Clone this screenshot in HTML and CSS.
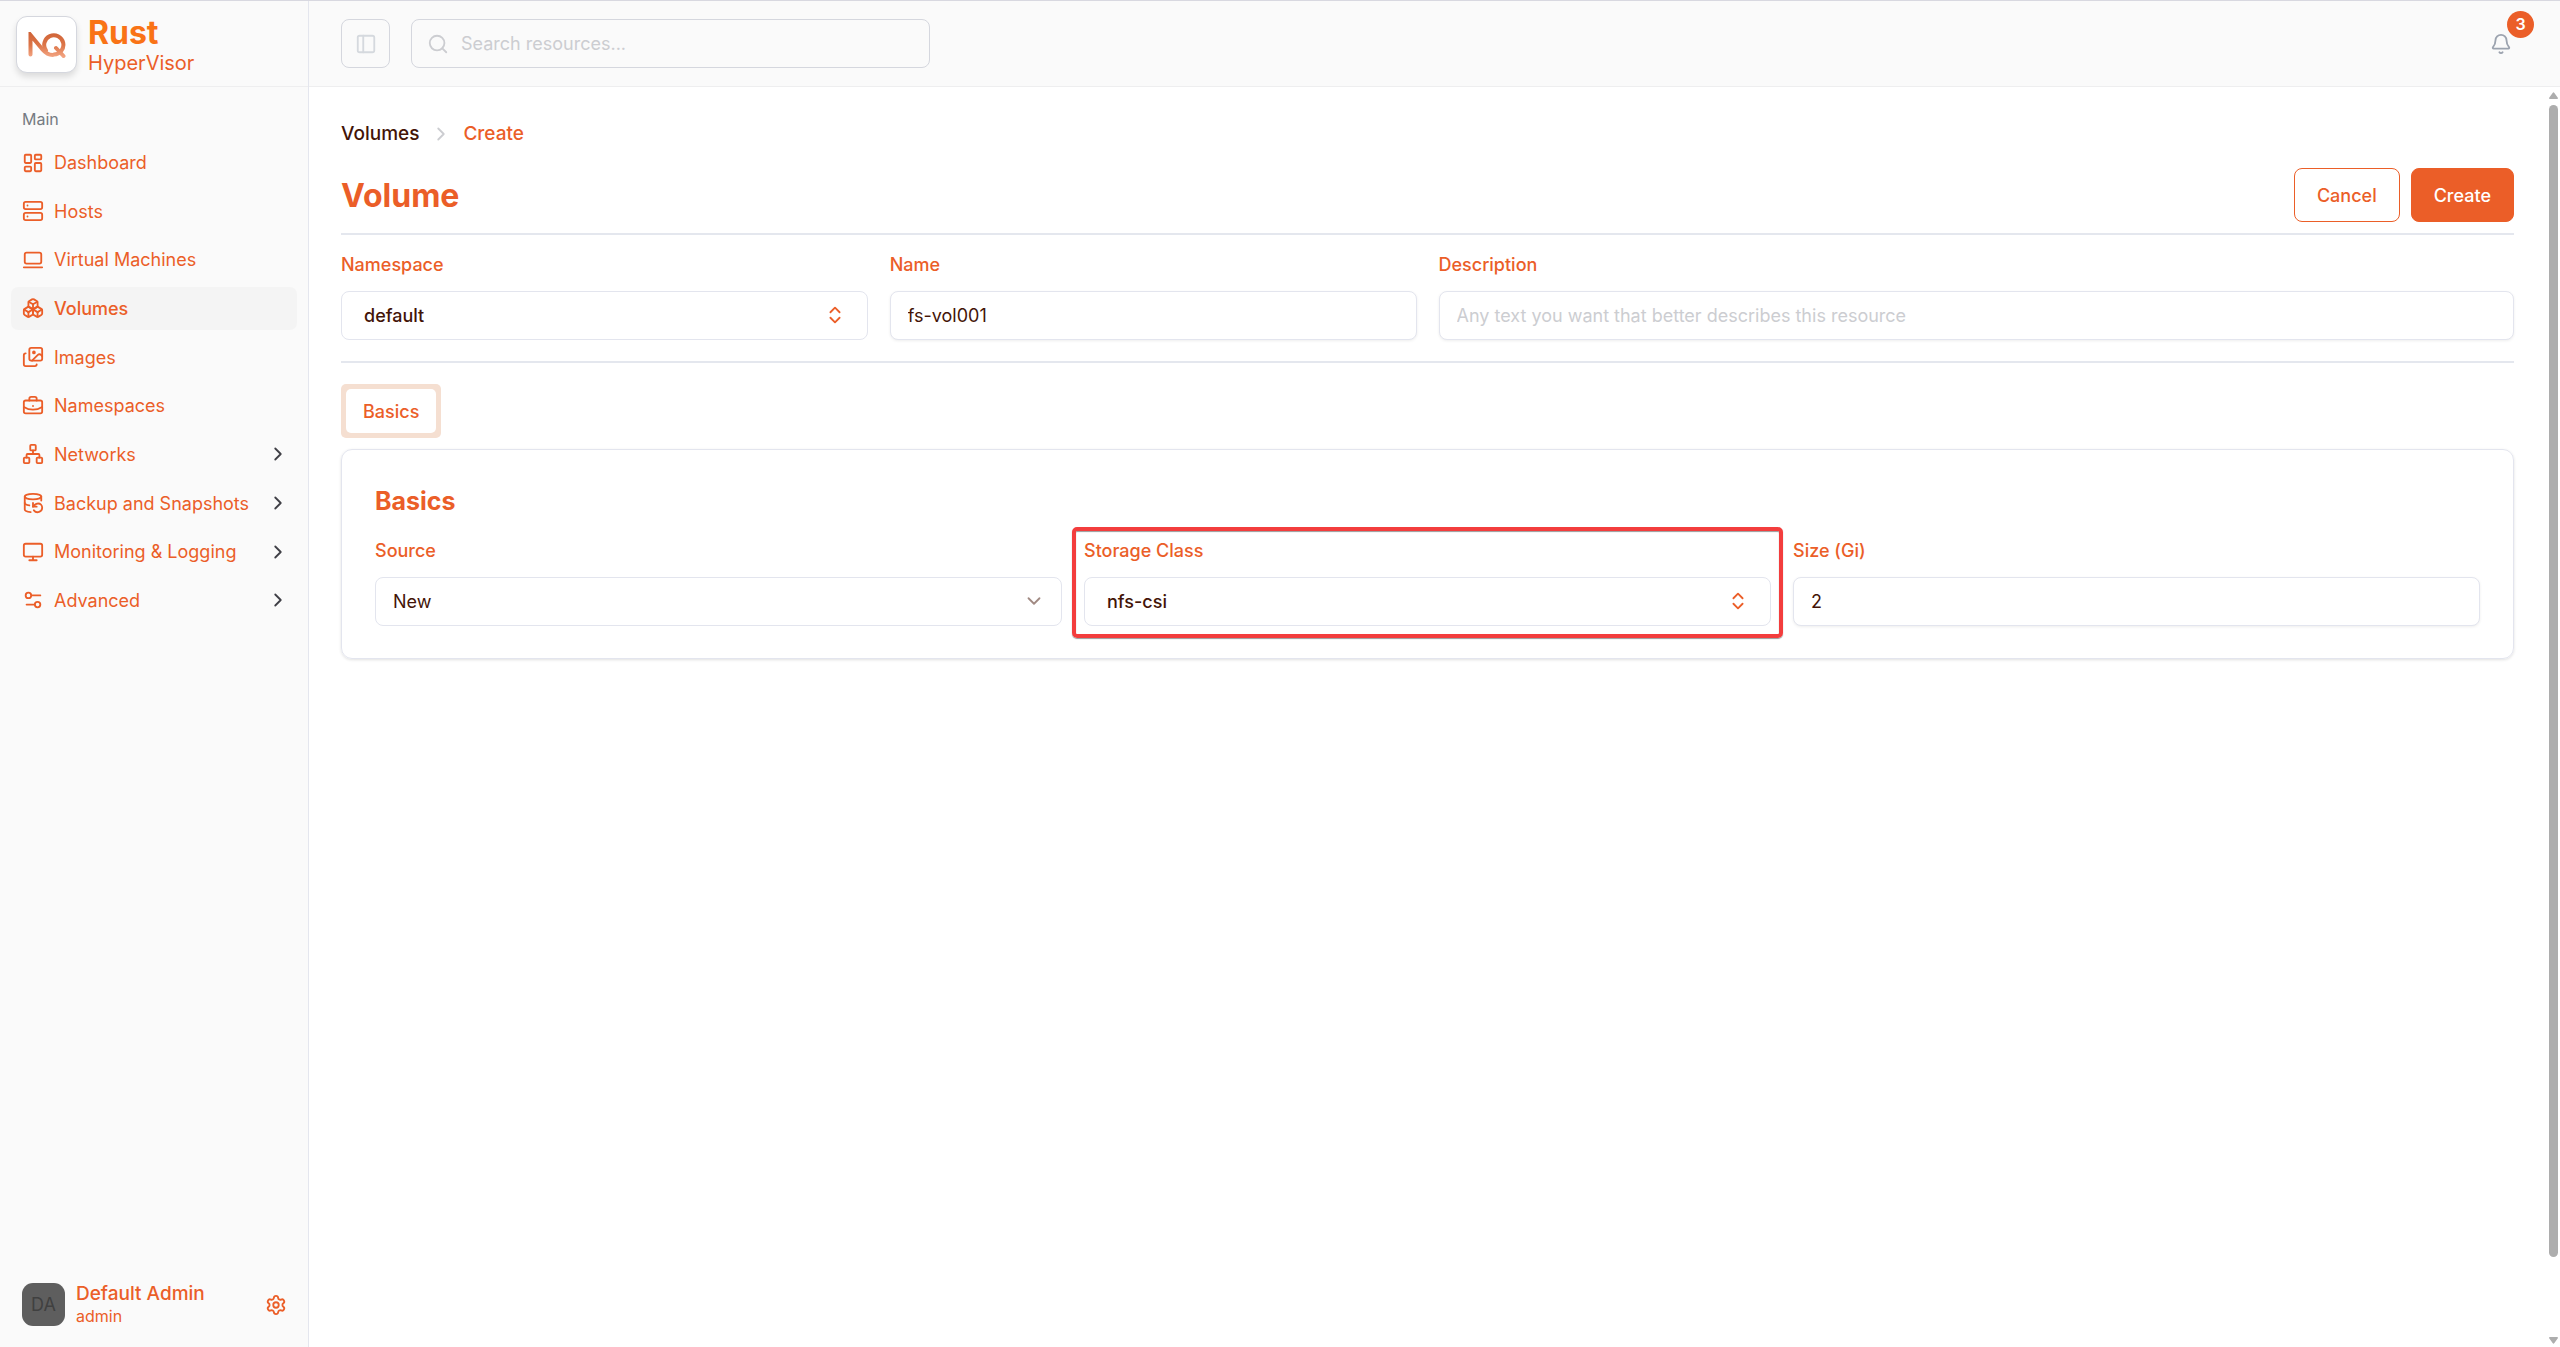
FILE: index.html
```html
<!DOCTYPE html>
<html lang="en">
<head>
    <meta charset="UTF-8">
    <meta name="viewport" content="width=device-width, initial-scale=1.0">
    <title>Volumes - Create</title>
    <link rel="stylesheet" href="styles.css">
</head>
<body>
    <div class="app">
        <aside class="sidebar">
            <div class="brand">
                <div class="brand-logo">
                    <svg width="38" height="26" viewBox="0 0 38 26" fill="none" stroke="url(#logo)" stroke-width="4" stroke-linecap="round">
                        <defs>
                            <linearGradient id="logo" gradientUnits="userSpaceOnUse" x1="0" y1="0" x2="0" y2="26">
                                <stop offset="0" stop-color="#cf6337"/>
                                <stop offset="0.5" stop-color="#dc7548"/>
                                <stop offset="1" stop-color="#f5a988"/>
                            </linearGradient>
                        </defs>
                        <path d="M2.500 22.500V3l12 14.500c3 3.500 6 5.500 10 5.500"/>
                        <path d="M18 18.500a9.600 9.600 0 1 1 8 4"/>
                        <path d="M28 16l7.500 8"/>
                        <path d="M17 11v6" stroke-width="2"/>
                    </svg>
                </div>
                <div class="brand-text">
                    <span class="brand-name">Rust</span>
                    <span class="brand-sub">HyperVisor</span>
                </div>
            </div>

            <nav class="nav">
                <div class="nav-title">Main</div>
                <ul class="nav-list">
                    <li><a class="nav-item" href="#">
                        <svg class="icon" viewBox="0 0 24 24"><rect width="7" height="9" x="3" y="3" rx="1"/><rect width="7" height="5" x="14" y="3" rx="1"/><rect width="7" height="9" x="14" y="12" rx="1"/><rect width="7" height="5" x="3" y="16" rx="1"/></svg>
                        <span>Dashboard</span>
                    </a></li>
                    <li><a class="nav-item" href="#">
                        <svg class="icon" viewBox="0 0 24 24"><rect width="20" height="8" x="2" y="2" rx="2"/><rect width="20" height="8" x="2" y="14" rx="2"/><path d="M6 6h.01M6 18h.01"/></svg>
                        <span>Hosts</span>
                    </a></li>
                    <li><a class="nav-item" href="#">
                        <svg class="icon" viewBox="0 0 24 24"><rect width="18" height="12" x="3" y="4" rx="2"/><path d="M2 20h20"/></svg>
                        <span>Virtual Machines</span>
                    </a></li>
                    <li><a class="nav-item active" href="#">
                        <svg class="icon" viewBox="0 0 24 24"><path d="M2.970 12.920A2 2 0 0 0 2 14.630v3.240a2 2 0 0 0 .970 1.710l3 1.800a2 2 0 0 0 2.060 0L12 19v-5.500l-5-3-4.030 2.420Z"/><path d="m7 16.500-4.740-2.850"/><path d="m7 16.500 5-3"/><path d="M7 16.500v5.170"/><path d="M12 13.500V19l3.970 2.380a2 2 0 0 0 2.060 0l3-1.800a2 2 0 0 0 .970-1.710v-3.240a2 2 0 0 0-.970-1.710L17 10.500l-5 3Z"/><path d="m17 16.500-5-3"/><path d="m17 16.500 4.740-2.850"/><path d="M17 16.500v5.170"/><path d="M7.970 4.420A2 2 0 0 0 7 6.130v4.370l5 3 5-3V6.130a2 2 0 0 0-.970-1.710l-3-1.800a2 2 0 0 0-2.060 0l-3 1.800Z"/><path d="M12 8 7.260 5.150"/><path d="m12 8 4.740-2.850"/><path d="M12 13.500V8"/></svg>
                        <span>Volumes</span>
                    </a></li>
                    <li><a class="nav-item" href="#">
                        <svg class="icon" viewBox="0 0 24 24"><path d="m22 11-1.296-1.296a2.400 2.400 0 0 0-3.408 0L11 16"/><path d="M4 8a2 2 0 0 0-2 2v10a2 2 0 0 0 2 2h10a2 2 0 0 0 2-2"/><circle cx="13" cy="7" r="1" fill="currentColor"/><rect x="8" y="2" width="14" height="14" rx="2"/></svg>
                        <span>Images</span>
                    </a></li>
                    <li><a class="nav-item" href="#">
                        <svg class="icon" viewBox="0 0 24 24"><path d="M12 12h.01"/><path d="M16 6V4a2 2 0 0 0-2-2h-4a2 2 0 0 0-2 2v2"/><path d="M22 13a18.150 18.150 0 0 1-20 0"/><rect width="20" height="14" x="2" y="6" rx="2"/></svg>
                        <span>Namespaces</span>
                    </a></li>
                    <li><a class="nav-item" href="#">
                        <svg class="icon" viewBox="0 0 24 24"><rect x="16" y="16" width="6" height="6" rx="1"/><rect x="2" y="16" width="6" height="6" rx="1"/><rect x="9" y="2" width="6" height="6" rx="1"/><path d="M5 16v-3a1 1 0 0 1 1-1h12a1 1 0 0 1 1 1v3"/><path d="M12 12V8"/></svg>
                        <span>Networks</span>
                        <svg class="icon chevron" viewBox="0 0 24 24"><path d="m9 18 6-6-6-6"/></svg>
                    </a></li>
                    <li><a class="nav-item" href="#">
                        <svg class="icon" viewBox="0 0 24 24"><ellipse cx="12" cy="5" rx="9" ry="3"/><path d="M3 12a9 3 0 0 0 5 2.690"/><path d="M21 9.300V5"/><path d="M3 5v14a9 3 0 0 0 6.470 2.880"/><path d="M12 12v4h4"/><path d="M13 20a5 5 0 0 0 9-3 4.500 4.500 0 0 0-4.500-4.500c-1.330 0-2.540.540-3.410 1.410L12 16"/></svg>
                        <span>Backup and Snapshots</span>
                        <svg class="icon chevron" viewBox="0 0 24 24"><path d="m9 18 6-6-6-6"/></svg>
                    </a></li>
                    <li><a class="nav-item" href="#">
                        <svg class="icon" viewBox="0 0 24 24"><rect width="20" height="14" x="2" y="3" rx="2"/><path d="M8 21h8M12 17v4"/></svg>
                        <span>Monitoring &amp; Logging</span>
                        <svg class="icon chevron" viewBox="0 0 24 24"><path d="m9 18 6-6-6-6"/></svg>
                    </a></li>
                    <li><a class="nav-item" href="#">
                        <svg class="icon" viewBox="0 0 24 24"><path d="M20 7h-9M14 17H5"/><circle cx="17" cy="17" r="3"/><circle cx="7" cy="7" r="3"/></svg>
                        <span>Advanced</span>
                        <svg class="icon chevron" viewBox="0 0 24 24"><path d="m9 18 6-6-6-6"/></svg>
                    </a></li>
                </ul>
            </nav>

            <div class="user">
                <div class="avatar">DA</div>
                <div class="user-text">
                    <span class="user-name">Default Admin</span>
                    <span class="user-role">admin</span>
                </div>
                <button class="icon-button" type="button" aria-label="Settings">
                    <svg class="icon" viewBox="0 0 24 24"><path d="M9.671 4.136a2.340 2.340 0 0 1 4.659 0 2.340 2.340 0 0 0 3.319 1.915 2.340 2.340 0 0 1 2.330 4.033 2.340 2.340 0 0 0 0 3.831 2.340 2.340 0 0 1-2.330 4.033 2.340 2.340 0 0 0-3.319 1.915 2.340 2.340 0 0 1-4.659 0 2.340 2.340 0 0 0-3.320-1.915 2.340 2.340 0 0 1-2.330-4.033 2.340 2.340 0 0 0 0-3.831A2.340 2.340 0 0 1 6.350 6.051a2.340 2.340 0 0 0 3.319-1.915"/><circle cx="12" cy="12" r="3"/></svg>
                </button>
            </div>
        </aside>

        <div class="page">
            <header class="topbar">
                <button class="panel-toggle" type="button" aria-label="Toggle sidebar">
                    <svg class="icon" viewBox="0 0 24 24"><rect width="18" height="18" x="3" y="3" rx="2"/><path d="M9 3v18"/></svg>
                </button>
                <label class="search">
                    <svg class="icon" viewBox="0 0 24 24"><circle cx="11" cy="11" r="8"/><path d="m21 21-4.300-4.300"/></svg>
                    <input type="text" placeholder="Search resources..." aria-label="Search resources">
                </label>
                <button class="bell" type="button" aria-label="Notifications">
                    <svg class="icon" viewBox="0 0 24 24"><path d="M10.268 21a2 2 0 0 0 3.464 0"/><path d="M3.262 15.326A1 1 0 0 0 4 17h16a1 1 0 0 0 .740-1.673C19.410 13.956 18 12.499 18 8A6 6 0 0 0 6 8c0 4.499-1.411 5.956-2.738 7.326"/></svg>
                    <span class="badge">3</span>
                </button>
            </header>

            <div class="scroll-area">
                <main class="content">
                    <nav class="breadcrumb" aria-label="Breadcrumb">
                        <a href="#">Volumes</a>
                        <svg class="icon" viewBox="0 0 24 24"><path d="m9 18 6-6-6-6"/></svg>
                        <span class="current">Create</span>
                    </nav>

                    <div class="title-row">
                        <h1>Volume</h1>
                        <button class="btn btn-outline" type="button">Cancel</button>
                        <button class="btn btn-primary" type="submit" form="volume-form">Create</button>
                    </div>

                    <form id="volume-form">
                        <div class="meta-grid">
                            <div class="field">
                                <label for="namespace">Namespace</label>
                                <div class="combo">
                                    <select id="namespace"><option>default</option></select>
                                    <svg class="icon" viewBox="0 0 24 24"><path d="m7 15 5 5 5-5"/><path d="m7 9 5-5 5 5"/></svg>
                                </div>
                            </div>
                            <div class="field">
                                <label for="name">Name</label>
                                <input id="name" type="text" value="fs-vol001">
                            </div>
                            <div class="field field-wide">
                                <label for="description">Description</label>
                                <input id="description" type="text" placeholder="Any text you want that better describes this resource">
                            </div>
                        </div>

                        <div class="tabs">
                            <button class="tab" type="button">Basics</button>
                        </div>

                        <section class="card">
                            <h2>Basics</h2>
                            <div class="card-grid">
                                <div class="field">
                                    <label for="source">Source</label>
                                    <div class="dropdown">
                                        <select id="source"><option>New</option></select>
                                        <svg class="icon" viewBox="0 0 24 24"><path d="m6 9 6 6 6-6"/></svg>
                                    </div>
                                </div>
                                <div class="field highlighted">
                                    <label for="storage-class">Storage Class</label>
                                    <div class="combo">
                                        <select id="storage-class"><option>nfs-csi</option></select>
                                        <svg class="icon" viewBox="0 0 24 24"><path d="m7 15 5 5 5-5"/><path d="m7 9 5-5 5 5"/></svg>
                                    </div>
                                </div>
                                <div class="field">
                                    <label for="size">Size (Gi)</label>
                                    <input id="size" type="text" value="2">
                                </div>
                            </div>
                        </section>
                    </form>
                </main>

                <div class="scrollbar" aria-hidden="true">
                    <svg width="9" height="7" viewBox="0 0 10 7" preserveAspectRatio="none"><path d="M4 1Q5-.500 6 1L10 6Q10 7 9 7H1Q0 7 0 6z"/></svg>
                    <div class="scroll-track"><div class="scroll-thumb"></div></div>
                    <svg width="9" height="7" viewBox="0 0 10 7" preserveAspectRatio="none"><path d="M4 6Q5 7.500 6 6L10 1Q10 0 9 0H1Q0 0 0 1z"/></svg>
                </div>
            </div>
        </div>
    </div>
</body>
</html>
```
FILE: styles.css
```css
* {
    box-sizing: border-box;
}

body {
    margin: 0;
    font-family: Inter, "Liberation Sans", sans-serif;
    font-size: 18px;
    line-height: 27px;
    color: #431407;
    background: #ffffff;
}

button,
input,
select {
    font: inherit;
    color: inherit;
}

button {
    padding: 0;
    border: none;
    background: none;
}

a {
    color: inherit;
    text-decoration: none;
}

.app {
    display: flex;
    min-height: 100vh;
    border-top: 1px solid #d8d8e0;
}

.icon {
    width: 22px;
    height: 22px;
    flex-shrink: 0;
    fill: none;
    stroke: currentColor;
    stroke-width: 2;
    stroke-linecap: round;
    stroke-linejoin: round;
}

/* Sidebar */
.sidebar {
    width: 309px;
    flex-shrink: 0;
    display: flex;
    flex-direction: column;
    background: #fafafa;
    border-right: 1px solid #e4e6ee;
    color: #eb5e28;
}

.brand {
    height: 86px;
    padding: 2px 16px 0;
    display: flex;
    align-items: center;
    gap: 11px;
    border-bottom: 1px solid #eeeeef;
}

.brand-logo {
    width: 61px;
    height: 57px;
    display: flex;
    align-items: center;
    justify-content: center;
    background: #ffffff;
    border: 1px solid #d5d7de;
    border-radius: 11px;
    box-shadow: 0 4px 6px rgba(0, 0, 0, 0.12);
}

.brand-text {
    padding-top: 4px;
    display: flex;
    flex-direction: column;
}

.brand-name {
    font-size: 32px;
    line-height: 32px;
    font-weight: 700;
    color: #f97316;
}

.brand-sub {
    font-size: 20px;
    line-height: 28px;
}

.nav {
    padding: 10px 11px;
}

.nav-title {
    padding: 8px 11px;
    font-size: 16px;
    line-height: 28px;
    color: #757a82;
}

.nav-list {
    height: 481px;
    margin: 0;
    padding: 0;
    list-style: none;
    display: flex;
    flex-direction: column;
    justify-content: space-between;
}

.nav-item {
    height: 43px;
    padding: 0 8px 0 11px;
    display: flex;
    align-items: center;
    gap: 10px;
    border-radius: 7px;
}

.nav-item.active {
    background: #f4f4f4;
    font-weight: 500;
}

.nav-item .chevron {
    margin-left: auto;
    color: #3f3f46;
}

.user {
    margin-top: auto;
    padding: 20px 21px 20px 22px;
    display: flex;
    align-items: center;
    gap: 11px;
}

.avatar {
    width: 43px;
    height: 43px;
    display: flex;
    align-items: center;
    justify-content: center;
    background: #5e5e5e;
    border-radius: 11px;
    color: #404040;
}

.user-text {
    display: flex;
    flex-direction: column;
}

.user-name {
    font-size: 19px;
    line-height: 23px;
    font-weight: 500;
}

.user-role {
    font-size: 16px;
    line-height: 22px;
}

.icon-button {
    margin-left: auto;
    display: flex;
}

/* Header */
.page {
    flex: 1;
    min-width: 0;
    display: flex;
    flex-direction: column;
}

.topbar {
    height: 86px;
    padding: 0 48px 0 32px;
    display: flex;
    align-items: center;
    gap: 21px;
    background: #fafafa;
    border-bottom: 1px solid #eeeeef;
}

.panel-toggle {
    width: 49px;
    height: 49px;
    display: flex;
    align-items: center;
    justify-content: center;
    border: 1px solid #d5d7de;
    border-radius: 8px;
    color: #d5d9de;
}

.search {
    width: 519px;
    height: 49px;
    padding: 0 15px;
    display: flex;
    align-items: center;
    gap: 12px;
    border: 1px solid #d5d7de;
    border-radius: 8px;
    color: #cccdd1;
}

.search input {
    flex: 1;
    min-width: 0;
    padding: 0;
    border: none;
    outline: none;
    background: none;
}

input::placeholder {
    color: #cccdd1;
    opacity: 1;
}

.bell {
    position: relative;
    margin-left: auto;
    display: flex;
    color: #9ca3af;
}

.badge {
    position: absolute;
    left: 17px;
    bottom: 17px;
    width: 27px;
    height: 27px;
    border-radius: 50%;
    background: #eb5e28;
    color: #ffffff;
    font-size: 16px;
    font-weight: 600;
    text-align: center;
}

/* Content */
.scroll-area {
    flex: 1;
    display: flex;
}

.content {
    flex: 1;
    min-width: 0;
    padding: 33px 33px 33px 32px;
}

.breadcrumb {
    margin-bottom: 21px;
    display: flex;
    align-items: center;
    gap: 11px;
    font-size: 19px;
    font-weight: 500;
}

.breadcrumb .icon {
    color: #cccdd1;
}

.breadcrumb .current {
    color: #eb5e28;
}

.title-row {
    padding-bottom: 11px;
    display: flex;
    align-items: center;
    gap: 11px;
    border-bottom: 2px solid #e4e7ee;
}

h1,
h2 {
    margin: 0;
    font-weight: 700;
    color: #eb5e28;
}

h1 {
    margin-right: auto;
    font-size: 32px;
}

.btn {
    height: 54px;
    padding: 0 22px;
    border: 1px solid #eb5e28;
    border-radius: 8px;
    font-weight: 500;
}

.btn-outline {
    color: #eb5e28;
}

.btn-primary {
    background: #eb5e28;
    color: #ffffff;
}

.meta-grid {
    padding: 16px 0 21px;
    display: grid;
    grid-template-columns: repeat(4, 1fr);
    gap: 22px;
    border-bottom: 2px solid #e4e7ee;
}

.field {
    position: relative;
    display: flex;
    flex-direction: column;
    gap: 13px;
}

.field-wide {
    grid-column: span 2;
}

.field label {
    color: #eb5e28;
    font-weight: 500;
}

.field input,
.field select {
    width: 100%;
    height: 49px;
    padding: 0 17px;
    appearance: none;
    background: #ffffff;
    border: 1px solid #e3e5ee;
    border-radius: 8px;
}

.field input {
    box-shadow: 0 1px 3px rgba(0, 0, 0, 0.07);
}

.dropdown,
.combo {
    position: relative;
    display: flex;
}

.field .combo select {
    padding: 0 22px;
    font-weight: 500;
}

.dropdown .icon,
.combo .icon {
    position: absolute;
    top: 13px;
    pointer-events: none;
}

.dropdown .icon {
    right: 17px;
    color: #a18a83;
}

.combo .icon {
    right: 22px;
    color: #eb5e28;
}

.tabs {
    width: fit-content;
    margin: 21px 0 11px;
    padding: 5px;
    display: flex;
    background: #f5dfd1;
    border-radius: 5px;
}

.tab {
    height: 44px;
    padding: 0 17px;
    background: #ffffff;
    border-radius: 5px;
    color: #eb5e28;
    font-weight: 500;
}

.card {
    padding: 32px 33px;
    border: 1px solid #e3e5ee;
    border-radius: 11px;
    box-shadow: 0 1px 3px rgba(0, 0, 0, 0.12);
}

h2 {
    margin-bottom: 17px;
    font-size: 25px;
    line-height: 38px;
}

.card-grid {
    display: grid;
    grid-template-columns: repeat(3, 1fr);
    gap: 22px;
}

/* Frame drawn around the field being pointed out */
.highlighted::after {
    content: "";
    position: absolute;
    inset: -10px -12px -12px;
    border: 4px solid #f33d3d;
    border-radius: 5px;
    box-shadow: 0 1px 1px #999999, inset 0 1px 1px #999999;
    pointer-events: none;
}

/* Scrollbar */
.scrollbar {
    width: 13px;
    padding: 5px 0 3px;
    display: flex;
    flex-direction: column;
    align-items: center;
    gap: 6px;
    fill: #adadad;
}

.scroll-track {
    flex: 1;
    width: 9px;
}

.scroll-thumb {
    height: 94%;
    background: #adadad;
    border-radius: 5px;
}
```
